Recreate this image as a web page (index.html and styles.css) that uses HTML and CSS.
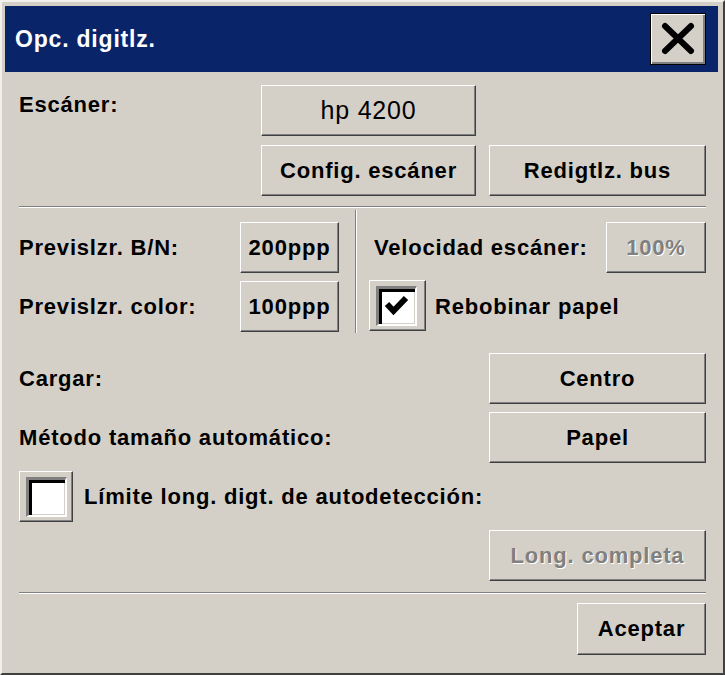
FILE: index.html
```html
<!DOCTYPE html>
<html lang="es">
<head>
<meta charset="utf-8">
<title>Opc. digitlz.</title>
<link rel="stylesheet" href="styles.css">
</head>
<body>
<div class="window">
  <div class="titlebar">
    <span class="title">Opc. digitlz.</span>
    <button class="close" aria-label="Cerrar">
      <svg width="40" height="36" viewBox="0 0 40 36"><path d="M7 5 L33 30 M33 5 L7 30" stroke="#000" stroke-width="6" stroke-linecap="round" fill="none"/></svg>
    </button>
  </div>
  <div class="content">
    <div class="scanner">
      <span class="label top">Escáner:</span>
      <button class="btn regular">hp 4200</button>
      <span></span>
      <span></span>
      <button class="btn">Config. escáner</button>
      <button class="btn">Redigtlz. bus</button>
    </div>
    <div class="sep"></div>
    <div class="mid">
      <div class="mid-left">
        <div class="mid-row"><span class="label">Previslzr. B/N:</span><button class="btn ppp">200ppp</button></div>
        <div class="mid-row"><span class="label">Previslzr. color:</span><button class="btn ppp">100ppp</button></div>
      </div>
      <div class="vsep"></div>
      <div class="mid-right">
        <div class="mid-row"><span class="label speed-label">Velocidad escáner:</span><button class="btn pct disabled">100%</button></div>
        <div class="mid-row start">
          <div class="chk chk-wide"><div class="box"><svg width="36" height="35" viewBox="0 0 36 35"><path d="M8 15 L14.5 22 L27 9" stroke="#000" stroke-width="6" stroke-linejoin="miter" fill="none"/></svg></div></div>
          <span class="label chk-label">Rebobinar papel</span>
        </div>
      </div>
    </div>
    <div class="row first"><span class="label">Cargar:</span><button class="btn wide">Centro</button></div>
    <div class="row"><span class="label">Método tamaño automático:</span><button class="btn wide">Papel</button></div>
    <div class="row start">
      <div class="chk"><div class="box"></div></div>
      <span class="label chk-label2">Límite long. digt. de autodetección:</span>
    </div>
    <div class="row end"><button class="btn wide disabled">Long. completa</button></div>
    <div class="sep sep2"></div>
    <div class="row end ok-row"><button class="btn ok">Aceptar</button></div>
  </div>
</div>
</body>
</html>
```
FILE: styles.css
```css
* { box-sizing: border-box; }
html, body { margin: 0; padding: 0; }
body {
  width: 725px;
  height: 675px;
  overflow: hidden;
  background: #d4d0c8;
  font-family: "Liberation Sans", Arial, sans-serif;
  font-weight: bold;
  font-size: 22px;
  letter-spacing: 0.8px;
  color: #000;
}
.window {
  width: 725px;
  height: 675px;
  border: 2px solid;
  border-color: #f2f0ea #404040 #404040 #f2f0ea;
  background: #d4d0c8;
  display: flex;
  flex-direction: column;
}
.titlebar {
  margin: 4px 5px 0 3px;
  height: 66px;
  background: #0a246a;
  display: flex;
  align-items: center;
  justify-content: space-between;
  padding: 0 12px 0 10px;
}
.title { color: #fff; font-size: 23px; }
.close {
  width: 56px;
  height: 52px;
  padding: 0;
  border: 1px solid #000;
  background: #d4d0c8;
  box-shadow: inset 1px 1px #fff, inset -2px -2px #808080;
  display: flex;
  align-items: center;
  justify-content: center;
}
.content { padding: 0 17px; display: flex; flex-direction: column; }
.scanner {
  margin-top: 13px;
  display: grid;
  grid-template-columns: 229px 215px 217px;
  grid-template-rows: 51px 51px;
  column-gap: 13px;
  row-gap: 9px;
}
.label { line-height: 26px; white-space: nowrap; }
.label.top { padding-top: 7px; }
.btn {
  height: 51px;
  padding: 0;
  font: inherit;
  letter-spacing: inherit;
  color: #000;
  border: 1px solid;
  border-color: #fff #404040 #404040 #fff;
  box-shadow: inset -1px -1px #808080;
  background: #d4d0c8;
  display: flex;
  align-items: center;
  justify-content: center;
}
.btn.regular { font-weight: normal; font-size: 25px; }
.btn.disabled { color: #808080; text-shadow: 1px 1px #fff; }
.sep {
  height: 2px;
  border-top: 1px solid #808080;
  border-bottom: 1px solid #fff;
  margin-top: 10px;
}
.sep2 { margin-top: 11px; }
.mid { display: flex; height: 125px; }
.mid-left {
  width: 320px;
  padding-top: 14px;
  display: flex;
  flex-direction: column;
  gap: 8px;
}
.mid-row {
  height: 51px;
  display: flex;
  align-items: center;
  justify-content: space-between;
}
.mid-row.start { justify-content: flex-start; }
.ppp { width: 99px; }
.vsep {
  width: 2px;
  margin: 2px 0 0 16px;
  border-left: 1px solid #808080;
  border-right: 1px solid #fff;
}
.mid-right {
  flex: 1;
  padding-top: 14px;
  display: flex;
  flex-direction: column;
  gap: 8px;
}
.speed-label { margin-left: 17px; }
.pct { width: 100px; }
.chk {
  width: 54px;
  height: 51px;
  border: 1px solid;
  border-color: #fff #404040 #404040 #fff;
  box-shadow: inset -1px -1px #808080;
  background: #d4d0c8;
  padding: 5px 0 0 6px;
  flex: none;
}
.chk-wide { width: 57px; margin-left: 12px; margin-top: -2px; }
.box {
  width: 41px;
  height: 40px;
  border-style: solid;
  border-width: 3px 2px 2px 3px;
  border-color: #808080 #fff #fff #808080;
  background: #fff;
  box-shadow: inset 3px 3px #000, inset -1px -1px #d4d0c8;
}
.box svg { display: block; }
.chk-label { margin-left: 9px; }
.chk-label2 { margin-left: 11px; }
.row {
  height: 51px;
  margin-top: 8px;
  display: flex;
  align-items: center;
  justify-content: space-between;
}
.row.first { margin-top: 20px; }
.row.start { justify-content: flex-start; }
.row.end { justify-content: flex-end; }
.wide { width: 217px; }
.ok-row { margin-top: 9px; height: 52px; }
.ok { width: 129px; height: 52px; }
```
